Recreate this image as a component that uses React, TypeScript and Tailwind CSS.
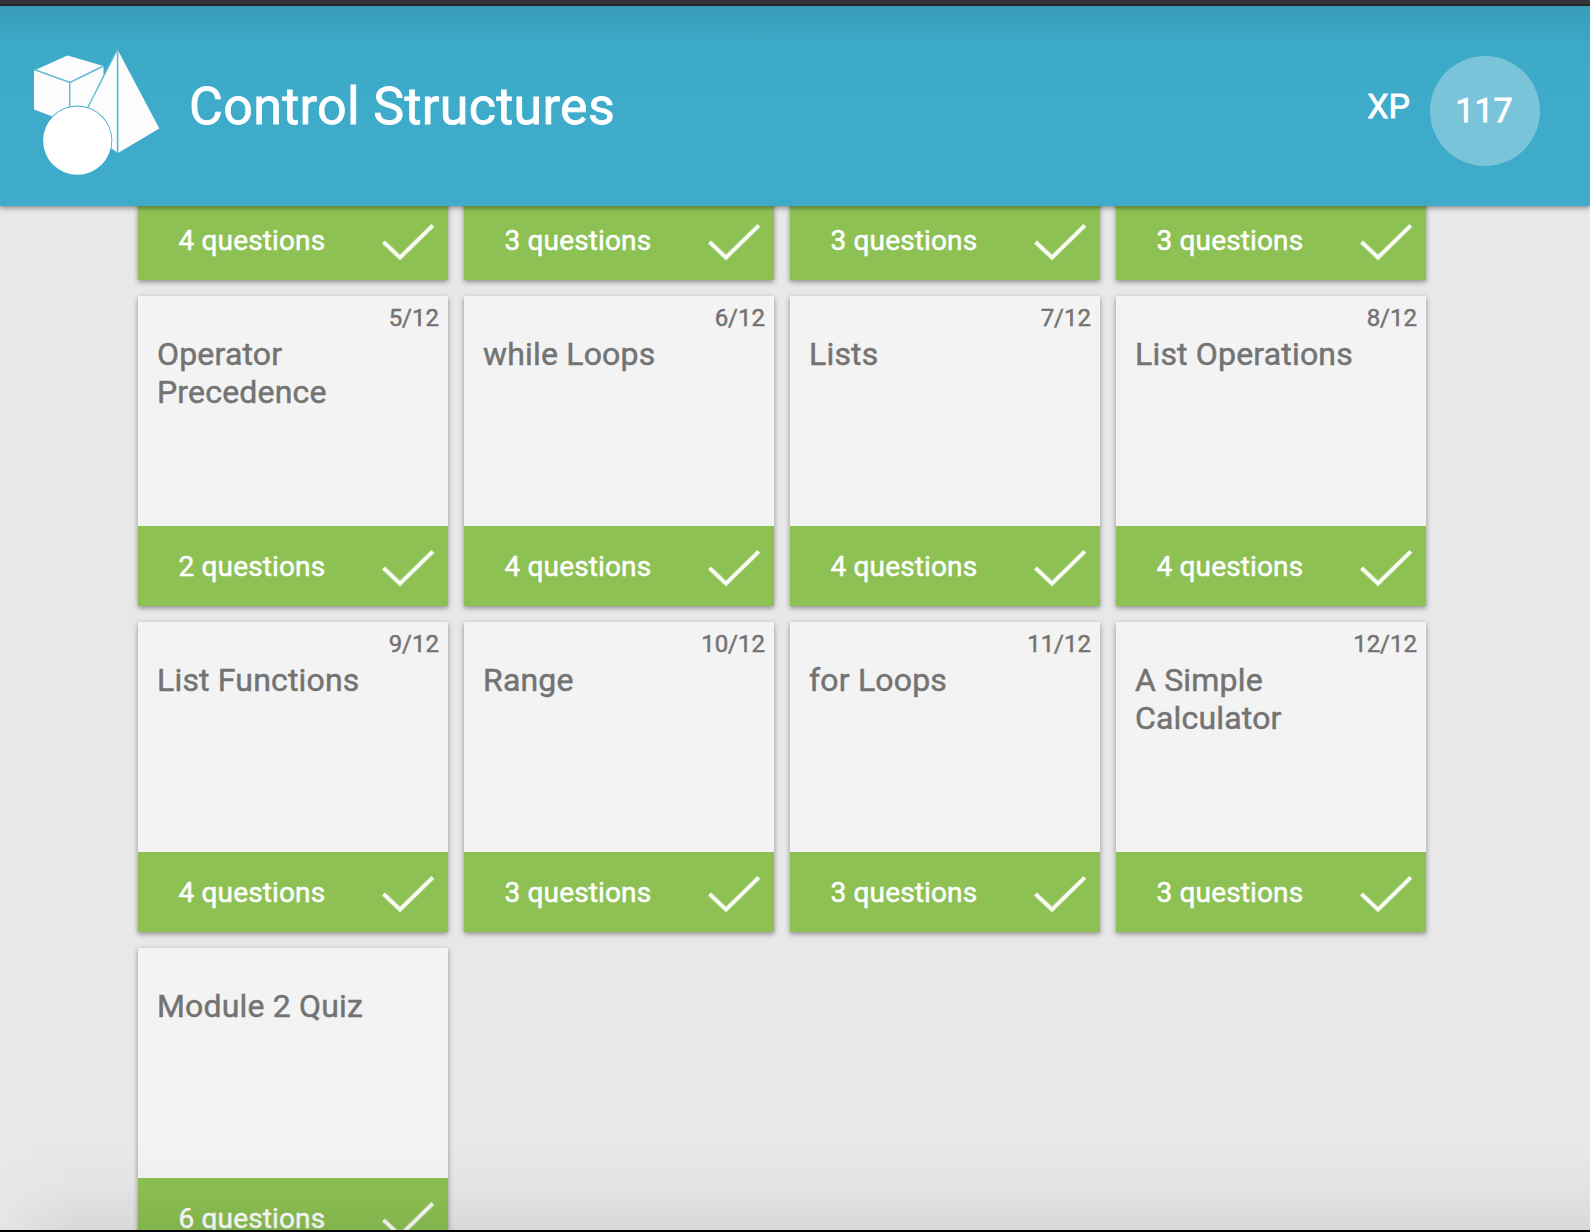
type Lesson = { title?: string; index?: string; questions: number };

const lessons: Lesson[] = [
  { questions: 4 },
  { questions: 3 },
  { questions: 3 },
  { questions: 3 },
  { title: "Operator Precedence", index: "5/12", questions: 2 },
  { title: "while Loops", index: "6/12", questions: 4 },
  { title: "Lists", index: "7/12", questions: 4 },
  { title: "List Operations", index: "8/12", questions: 4 },
  { title: "List Functions", index: "9/12", questions: 4 },
  { title: "Range", index: "10/12", questions: 3 },
  { title: "for Loops", index: "11/12", questions: 3 },
  { title: "A Simple Calculator", index: "12/12", questions: 3 },
  { title: "Module 2 Quiz", questions: 6 },
];

function ShapesLogo() {
  return (
    <svg width="128" height="128" viewBox="32 48 128 128" className="mt-3 shrink-0">
      <path d="M34 70.5 67.500 55.500 103.500 66V75L88 108 70 116 52.500 116.500 34 109.500Z" fill="#fcfcfc" />
      <path d="M34 69.500 70 82.500 103.500 66M69.700 82.500V112" fill="none" stroke="#5fbad2" strokeWidth="1.400" />
      <path d="M117.500 49.500 159.300 128.500 118 153 108 146 86 110Z" fill="#fcfcfc" />
      <path d="M116.500 51 87.500 108" fill="none" stroke="#5fbad2" strokeWidth="1.400" />
      <path d="M117.600 50V153" fill="none" stroke="#5fbad2" strokeWidth="1.700" />
      <circle cx="77.300" cy="140.600" r="35" fill="#3dabc9" />
      <circle cx="77.300" cy="140.600" r="34.200" fill="#fff" />
    </svg>
  );
}

function Check() {
  return (
    <svg width="56" height="40" viewBox="0 0 56 40" className="mt-0.5 shrink-0">
      <path d="M3.500 21 20 36.500 52.800 4.500" fill="none" stroke="#ffffff" strokeOpacity="0.3" strokeWidth="5.200" />
      <path d="M3.500 21 20 36.500 52.800 4.500" fill="none" stroke="#fafdf6" strokeWidth="3.600" />
    </svg>
  );
}

function Card({ title, index, questions }: Lesson) {
  return (
    <article className="flex h-[310px] flex-col bg-[#f3f3f3] shadow-[0_2px_5px_rgba(0,0,0,0.4)]">
      <div className="h-[38px] pt-[7px] pr-[9px] text-right text-[24px] leading-[30px] text-[#737373]">{index}</div>
      <h2 className="w-[260px] flex-1 pt-px pl-[19px] text-[32px] leading-[38px] tracking-[0.18px] text-[#737373]">{title}</h2>
      <footer className="flex h-20 items-center justify-between bg-[#8dc153] pr-[12px] pl-[40.500px] text-[28px] tracking-[0.15px] text-white">
        <span className="mt-px">{questions} questions</span>
        <Check />
      </footer>
    </article>
  );
}

export default function App() {
  return (
    <div className="relative flex h-[1232px] w-full flex-col overflow-hidden bg-[#e8e8e8] font-['Roboto',sans-serif] font-normal [-webkit-text-stroke:0.5px]">
      <div className="h-1.5 shrink-0 border-b-2 border-[#28292c] bg-[#35363a]" />
      <header className="z-10 flex h-[200px] shrink-0 items-center bg-[#3dabc9] bg-linear-to-b from-[#389cb8] via-[#3ca9c7] via-20% to-[#3dabc9] to-50% pr-[50px] pl-8 text-white shadow-[0_2px_5px_rgba(0,0,0,0.4)] [-webkit-text-stroke:0.8px]">
        <ShapesLogo />
        <h1 className="mt-px ml-[29px] text-[52px] leading-none tracking-[0.33px]">Control Structures</h1>
        <span className="ml-auto text-[34px]">XP</span>
        <div className="mt-[9px] ml-5 flex size-[110px] items-center justify-center rounded-full bg-[#79c4d9] pr-0.5 text-[34px]">117</div>
      </header>
      <main className="min-h-0 flex-1 overflow-hidden pl-[138px]">
        <div className="-mt-[236px] grid grid-cols-[repeat(4,310px)] gap-4">
          {lessons.map((lesson, i) => (
            <Card key={i} {...lesson} />
          ))}
        </div>
      </main>
      <div className="pointer-events-none absolute inset-x-0 bottom-0.5 h-[90px] bg-linear-to-b from-transparent via-black/[0.015] to-black/[0.07] [mask-image:linear-gradient(to_right,rgba(0,0,0,0.15),black_80px)]" />
      <div className="h-0.5 shrink-0 bg-black" />
    </div>
  );
}
